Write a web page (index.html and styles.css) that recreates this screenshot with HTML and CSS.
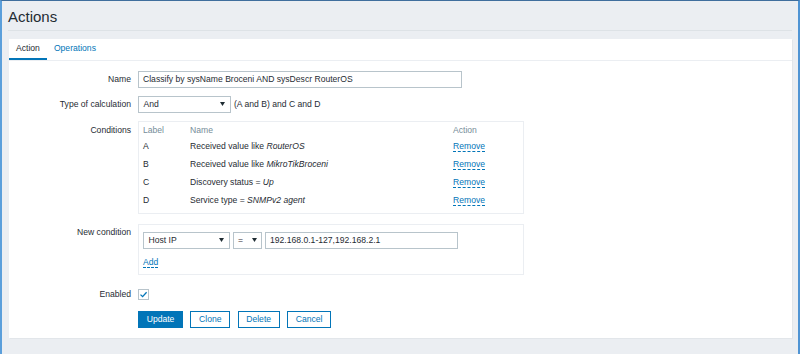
FILE: index.html
```html
<!DOCTYPE html>
<html>
<head>
<meta charset="utf-8">
<link rel="stylesheet" href="styles.css">
</head>
<body>
<div class="frame">
  <header class="page-header"><h1>Actions</h1></header>
  <main class="panel">
    <nav class="tabs">
      <span class="tab active">Action</span>
      <span class="tab">Operations</span>
    </nav>
    <div class="form">
      <div class="row row-name">
        <div class="lbl">Name</div>
        <div class="input name-input">Classify by sysName Broceni AND sysDescr RouterOS</div>
      </div>
      <div class="row row-calc">
        <div class="lbl">Type of calculation</div>
        <div class="select calc-select"><span>And</span><svg class="arrow" width="5" height="4" viewBox="0 0 5 4"><path d="M0 0H5L2.5 4Z"/></svg></div>
        <span class="formula">(A and B) and C and D</span>
      </div>
      <div class="row row-cond">
        <div class="lbl lbl-top">Conditions</div>
        <div class="box cond-box">
          <div class="cond-table">
            <div class="th">Label</div><div class="th">Name</div><div class="th">Action</div>
            <div class="td">A</div><div class="td">Received value like <i>RouterOS</i></div><div class="td"><a class="link">Remove</a></div>
            <div class="td">B</div><div class="td">Received value like <i>MikroTikBroceni</i></div><div class="td"><a class="link">Remove</a></div>
            <div class="td">C</div><div class="td">Discovery status = <i>Up</i></div><div class="td"><a class="link">Remove</a></div>
            <div class="td">D</div><div class="td">Service type = <i>SNMPv2 agent</i></div><div class="td"><a class="link">Remove</a></div>
          </div>
        </div>
      </div>
      <div class="row row-new">
        <div class="lbl">New condition</div>
        <div class="box new-box">
          <div class="new-line">
            <div class="select host-select"><span>Host IP</span><svg class="arrow" width="5" height="4" viewBox="0 0 5 4"><path d="M0 0H5L2.5 4Z"/></svg></div>
            <div class="select op-select"><span>=</span><svg class="arrow" width="5" height="4" viewBox="0 0 5 4"><path d="M0 0H5L2.5 4Z"/></svg></div>
            <div class="input ip-input">192.168.0.1-127,192.168.2.1</div>
          </div>
          <div class="add-line"><a class="link">Add</a></div>
        </div>
      </div>
      <div class="row row-enabled">
        <div class="lbl">Enabled</div>
        <div class="checkbox"><svg width="9" height="9" viewBox="0 0 9 9"><path d="M1.5 4.6L3.6 6.6L7.6 2.2" fill="none" stroke="#0275b8" stroke-width="1.3"/></svg></div>
      </div>
      <div class="row row-buttons">
        <div class="lbl"></div>
        <div class="buttons">
          <button class="btn primary">Update</button>
          <button class="btn">Clone</button>
          <button class="btn">Delete</button>
          <button class="btn">Cancel</button>
        </div>
      </div>
    </div>
  </main>
</div>
</body>
</html>
```
FILE: styles.css
```css
* { box-sizing: border-box; }
html, body { margin: 0; padding: 0; }
body {
  font-family: "Liberation Sans", Arial, sans-serif;
  font-size: 8.6px;
  color: #1f2c33;
  background: #ebeef2;
}
.frame {
  height: 354px;
  overflow: hidden;
  border-top: 1px solid #3f6e9d;
  border-left: 2px solid #5b9fdb;
  border-right: 2px solid #4f94d4;
  padding: 0 6px 0 7px;
}
.page-header {
  padding: 6.5px 0 4.5px 0;
  margin-left: -1px;
  border-bottom: 1px solid #dde2e6;
}
h1 {
  margin: 0;
  font-size: 15px;
  line-height: 18px;
  font-weight: normal;
}
.panel {
  margin-top: 8px;
  height: 299px;
  background: #fff;
  box-shadow: 1px 1px 0 #e2e6ea;
}
.tabs {
  display: flex;
  border-bottom: 1px solid #ebeef2;
}
.tab {
  padding: 0 7px;
  line-height: 19px;
  border-bottom: 2px solid transparent;
  color: #0275b8;
}
.tab.active {
  color: #1f2c33;
  border-bottom-color: #0275b8;
}
.form { padding-top: 10px; }
.row {
  display: flex;
  align-items: flex-start;
}
.row-name { margin-bottom: 7.5px; }
.row-calc { margin-bottom: 8px; align-items: center; }
.row-cond { margin-bottom: 10px; }
.row-new { margin-bottom: 11px; }
.row-enabled { margin-bottom: 8px; align-items: center; height: 17px; }
.lbl {
  width: 122px;
  flex: none;
  margin-right: 7px;
  text-align: right;
  line-height: 17px;
  white-space: nowrap;
}
.lbl-top { padding-top: 1px; }
.input {
  height: 17px;
  border: 1px solid #b8c4cb;
  padding: 0 4px;
  line-height: 15px;
  white-space: nowrap;
}
.name-input { width: 324px; }
.select {
  display: flex;
  align-items: center;
  justify-content: space-between;
  height: 17px;
  border: 1px solid #b8c4cb;
  padding: 0 4px 0 4.5px;
  line-height: 15px;
}
.arrow { fill: #1f2c33; display: block; }
.calc-select { width: 93px; padding-right: 5px; }
.formula { margin-left: 3px; }
.box {
  border: 1px solid #ebeef2;
}
.cond-box {
  width: 386px;
  padding: 2px 4px 3px;
}
.cond-table {
  display: grid;
  grid-template-columns: 47px 263px auto;
}
.th {
  color: #768d99;
  line-height: 13px;
  height: 13px;
}
.td {
  line-height: 18.3px;
  height: 18.3px;
  white-space: nowrap;
}
.link {
  color: #0275b8;
  border-bottom: 1px dashed #0275b8;
  text-decoration: none;
}
.new-box {
  width: 386px;
  padding: 7px 4px 5px;
}
.new-line {
  display: flex;
  gap: 3px;
}
.host-select { width: 86.5px; padding-right: 5px; }
.op-select { width: 29.5px; padding-right: 4px; }
.ip-input { width: 193px; }
.add-line {
  margin-top: 6px;
  line-height: 14px;
  height: 14px;
}
.checkbox {
  width: 11px;
  height: 11px;
  border: 1px solid #b8c4cb;
  display: flex;
  align-items: center;
  justify-content: center;
}
.checkbox svg { display: block; }
.buttons { display: flex; }
.btn {
  height: 17px;
  margin: 0 7.3px 0 0;
  padding: 0 7.7px;
  border: 1px solid #0275b8;
  background: #fff;
  color: #0275b8;
  font-family: "Liberation Sans", Arial, sans-serif;
  font-size: 8.6px;
  line-height: 15px;
  border-radius: 0;
}
.btn.primary {
  background: #0275b8;
  color: #fff;
}
```
